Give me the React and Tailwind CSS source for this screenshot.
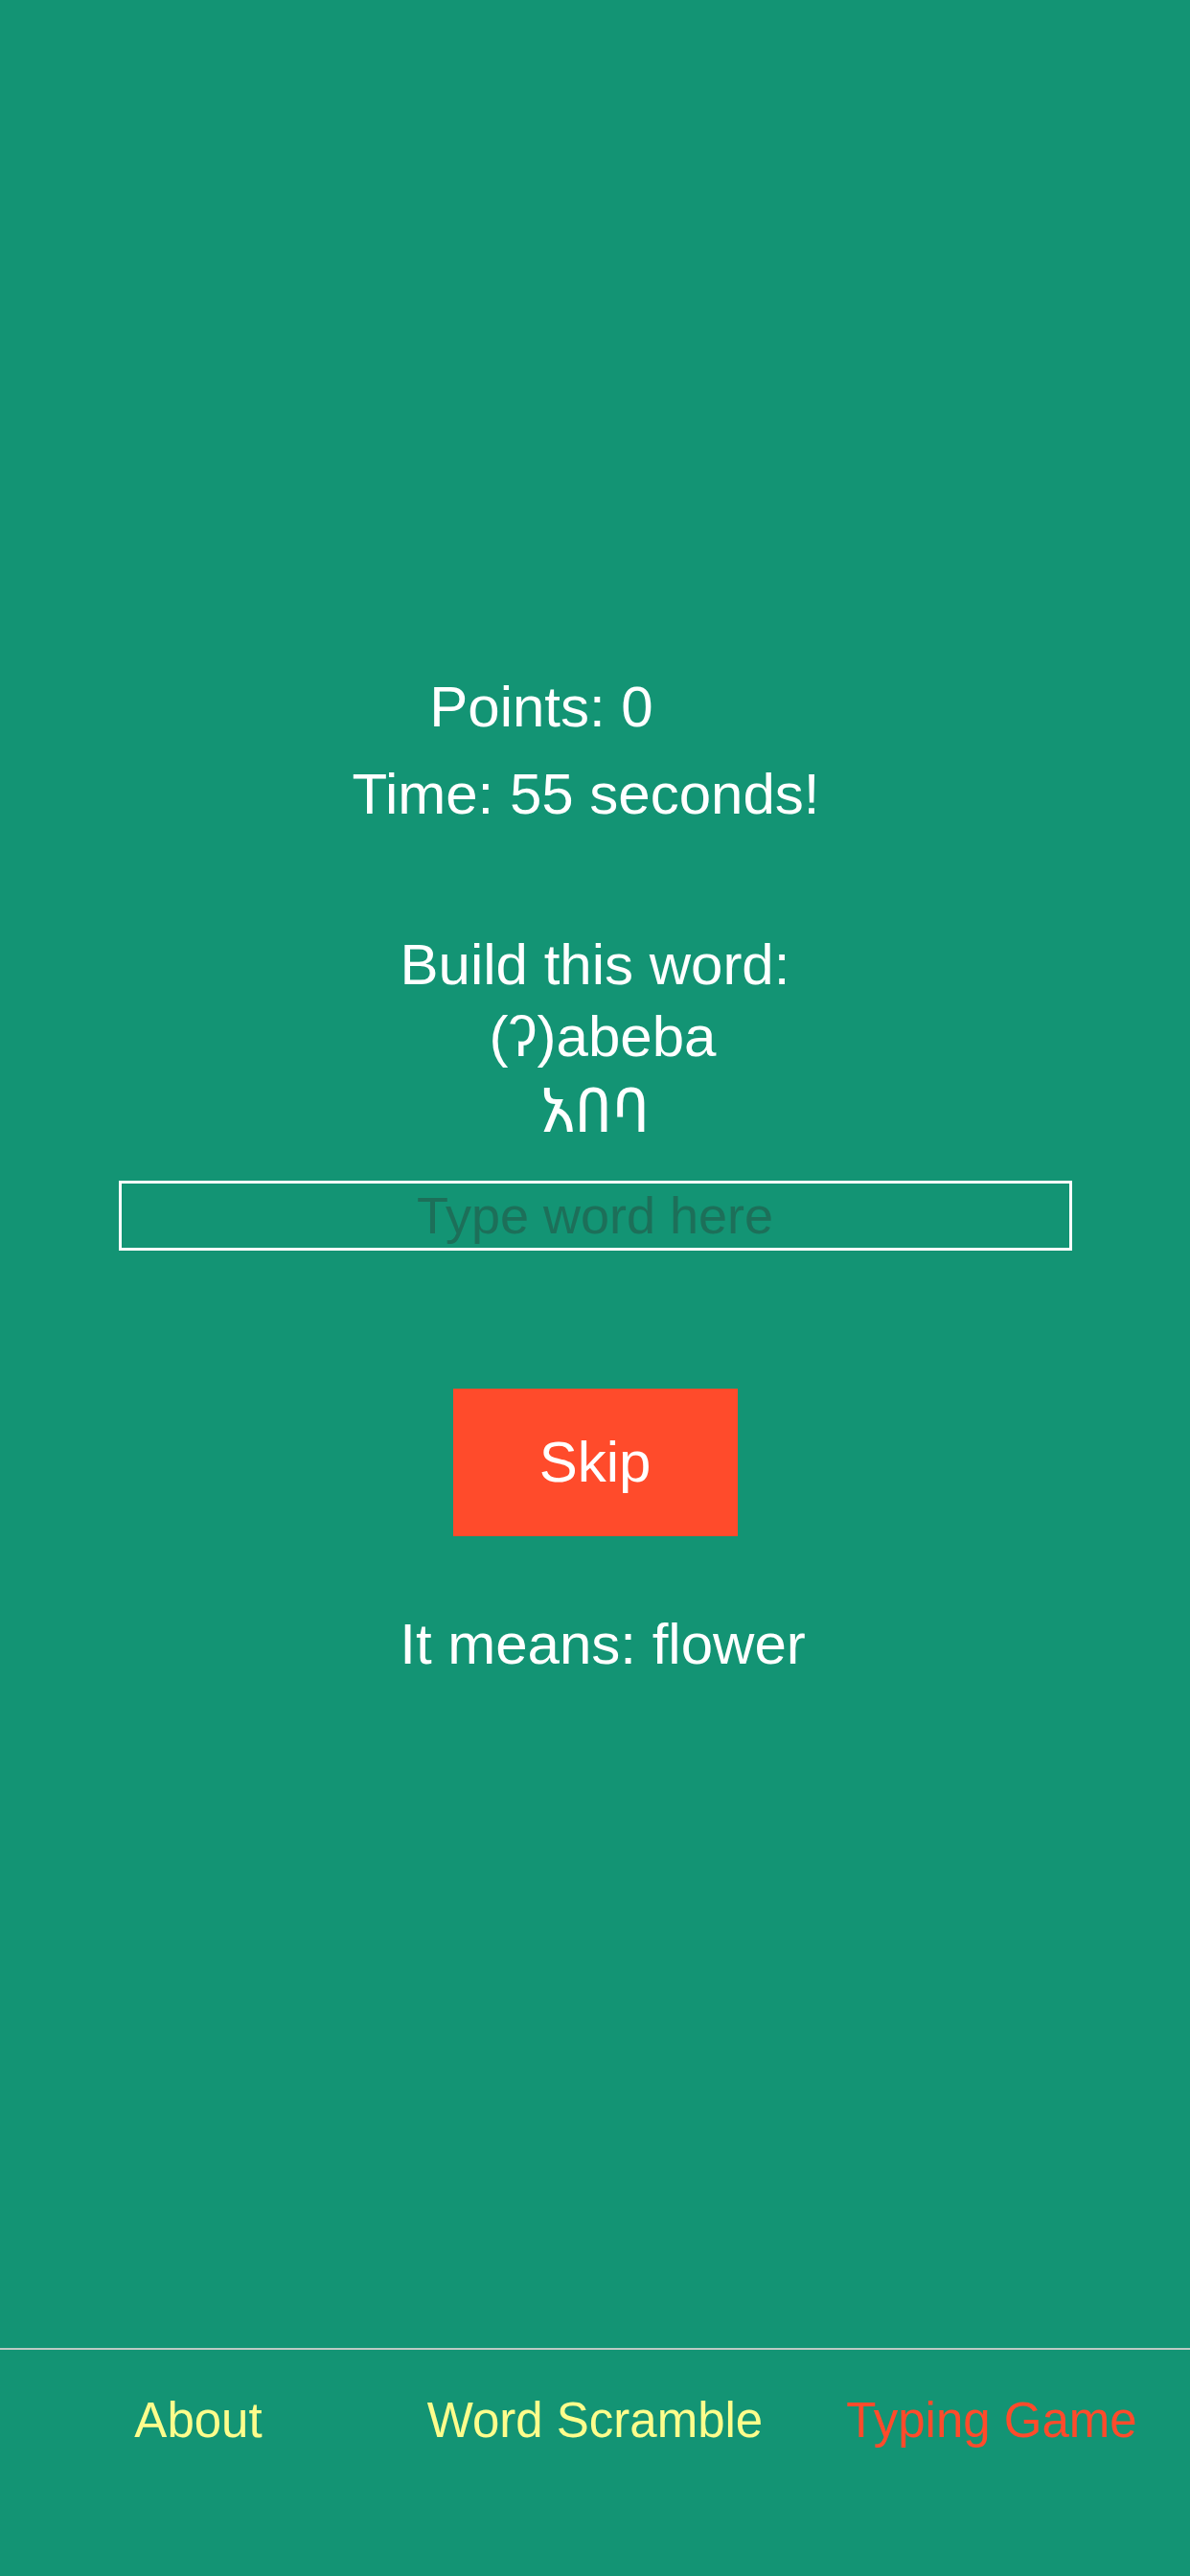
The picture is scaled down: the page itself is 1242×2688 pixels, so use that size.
import React, { useState } from 'react';

const tabs = [
  { label: 'About', active: false },
  { label: 'Word Scramble', active: false },
  { label: 'Typing Game', active: true },
];

const App = () => {
  const [word, setWord] = useState('');

  return (
    <div className="h-[2688px] w-full flex flex-col bg-[#139474] text-white font-['Liberation_Sans',Arial,sans-serif]">
      <main className="flex-1 flex flex-col items-center pt-[700px]">
        <div className="text-[60px] leading-[75px] mr-[112px] mb-[16px]">Points: 0</div>
        <div className="text-[60px] leading-[75px] mr-[19px]">Time: 55 seconds!</div>

        <div className="text-[60px] leading-[75px] mt-[103px]">Build this word:</div>
        <div className="text-[60px] leading-[75px] ml-[16px]">(ʔ)abeba</div>
        <div className="text-[64px] leading-[75px] font-['Noto_Sans_Ethiopic','Abyssinica_SIL','DejaVu_Sans',sans-serif]">አበባ</div>

        <input
          value={word}
          onChange={(e) => setWord(e.target.value)}
          placeholder="Type word here"
          className="mt-[38px] w-[995px] h-[73px] border-[3px] border-white bg-transparent text-center text-[54px] text-white placeholder:text-[#1d6f59] outline-none"
        />

        <button className="mt-[144px] w-[297px] h-[154px] bg-[#ff4b2b] flex items-center justify-center text-[60px] text-white">
          Skip
        </button>

        <div className="text-[60px] leading-[75px] mt-[75px] ml-[16px]">It means: flower</div>
      </main>

      <nav className="h-[238px] border-t-2 border-[#bccbc4] grid grid-cols-3 pt-[44px]">
        {tabs.map((tab) => (
          <div
            key={tab.label}
            className={`text-center text-[51px] leading-[60px] ${tab.active ? 'text-[#ff4b2b]' : 'text-[#fdfd8c]'}`}
          >
            {tab.label}
          </div>
        ))}
      </nav>
    </div>
  );
};

export default App;
